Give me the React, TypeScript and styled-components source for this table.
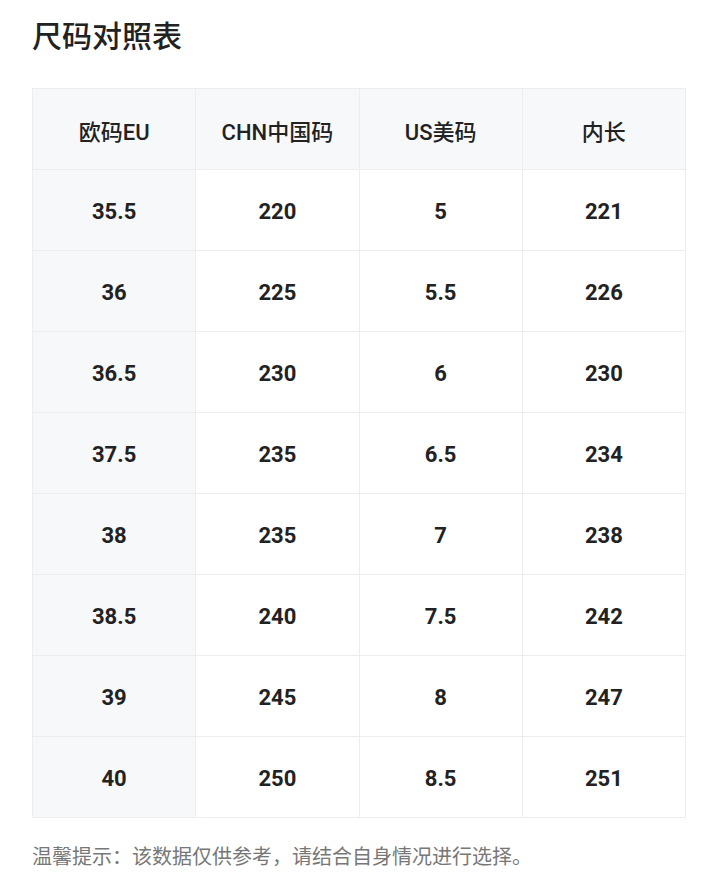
import React from "react";
import styled, { createGlobalStyle } from "styled-components";

const Global = createGlobalStyle`
  html, body { margin: 0; padding: 0; background: #fff; }
  body { font-family: Roboto, "Noto Sans CJK SC", sans-serif; }
`;

const Page = styled.div`
  padding: 16px 34px 0 32px;
`;

const Title = styled.h1`
  margin: 0;
  font-size: 30px;
  line-height: 42px;
  font-weight: 500;
  color: #222;
`;

const Table = styled.div`
  margin-top: 30px;
  display: grid;
  grid-template-columns: repeat(4, 1fr);
  border-top: 1px solid #ebedf0;
  border-left: 1px solid #ebedf0;
`;

const Cell = styled.div<{ $shaded?: boolean; $head?: boolean }>`
  height: 81px;
  display: flex;
  align-items: center;
  justify-content: center;
  border-right: 1px solid #ebedf0;
  border-bottom: 1px solid #ebedf0;
  background: ${(p) => (p.$shaded ? "#f7f8fa" : "#fff")};
  font-size: 22px;
  font-weight: ${(p) => (p.$head ? 500 : 700)};
  color: #222;
  padding-top: 2px;
  box-sizing: border-box;
`;

const Note = styled.p`
  margin: 24px 0 0;
  font-size: 20px;
  line-height: 30px;
  color: #777;
`;

const headers = ["欧码EU", "CHN中国码", "US美码", "内长"];
const rows = [
  ["35.5", "220", "5", "221"],
  ["36", "225", "5.5", "226"],
  ["36.5", "230", "6", "230"],
  ["37.5", "235", "6.5", "234"],
  ["38", "235", "7", "238"],
  ["38.5", "240", "7.5", "242"],
  ["39", "245", "8", "247"],
  ["40", "250", "8.5", "251"],
];

export default function App() {
  return (
    <Page>
      <Global />
      <Title>尺码对照表</Title>
      <Table>
        {headers.map((h) => (
          <Cell key={h} $shaded $head>
            {h}
          </Cell>
        ))}
        {rows.map((r, i) =>
          r.map((v, j) => (
            <Cell key={`${i}-${j}`} $shaded={j === 0}>
              {v}
            </Cell>
          ))
        )}
      </Table>
      <Note>温馨提示：该数据仅供参考，请结合自身情况进行选择。</Note>
    </Page>
  );
}
